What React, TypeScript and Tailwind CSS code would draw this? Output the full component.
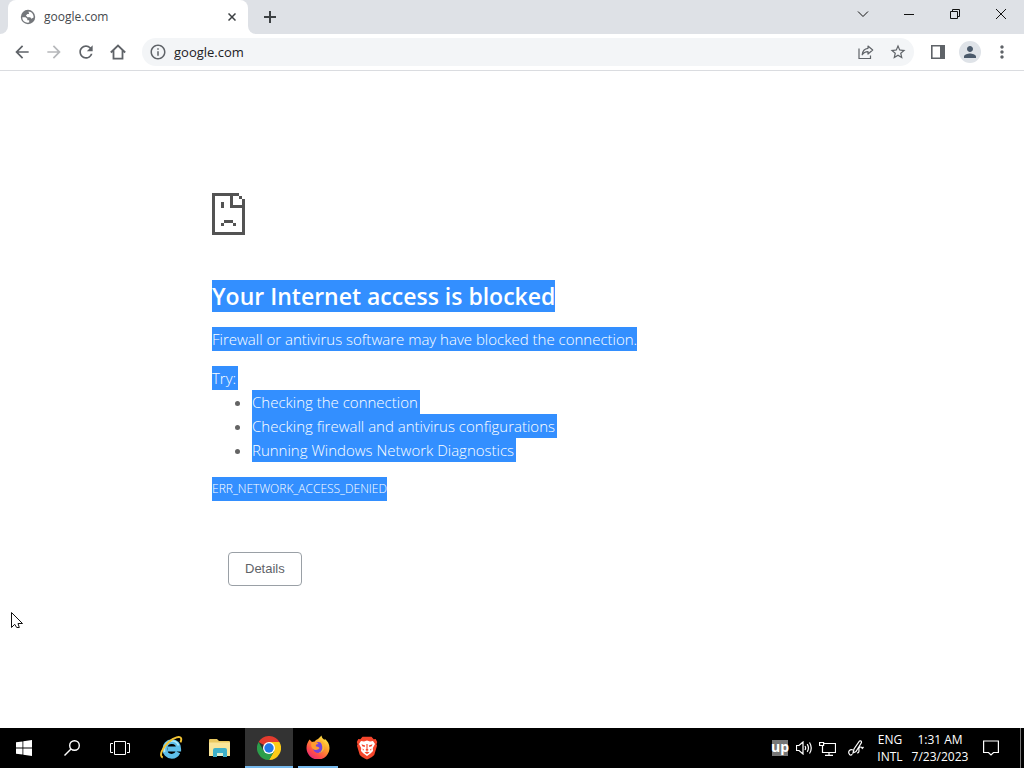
import type { ReactNode } from "react";
import { MdArrowBack, MdArrowForward, MdInfoOutline, MdMoreVert, MdPerson, MdRefresh, MdStarBorder } from "react-icons/md";

function Selected({ children, className = "" }: { children: ReactNode; className?: string }) {
  return <span className={`inline-block bg-[#338fff] text-white ${className}`}>{children}</span>;
}

function IconButton({ label, children, className = "w-8" }: { label: string; children: ReactNode; className?: string }) {
  return (
    <button aria-label={label} className={`flex h-8 shrink-0 items-center justify-center text-[#5f6368] ${className}`}>
      {children}
    </button>
  );
}

function WindowButton({ label, path }: { label: string; path: string }) {
  return (
    <button aria-label={label} className="flex h-7 w-[46px] items-center justify-center">
      <svg width="12" height="12" viewBox="0 0 12 12" fill="none" stroke="#111" strokeWidth="1">
        <path d={path} />
      </svg>
    </button>
  );
}

function TabStrip() {
  return (
    <header className="flex h-[34px] bg-[#dee1e6]">
      <div className="h-2 w-2 self-end bg-white">
        <div className="h-full rounded-br-lg bg-[#dee1e6]" />
      </div>
      <div className="flex w-60 items-center rounded-t-lg bg-white pr-2 pl-3">
        <svg className="shrink-0" width="16" height="16" viewBox="0 0 16 16" aria-hidden="true">
          <circle cx="8" cy="8" r="7.200" fill="#74777b" />
          <path d="M2.300 8.200h3.200l1.800 1.500v1.600h1.900v2.200c-3.600.8-7-1.600-6.900-5.300zM8.500 2.500c3 .2 5.300 2.700 5.100 5.900l-2.200 1.300-1.200-1.500H7.400L5.900 6.600 7.400 5h1.700z" fill="#fff" />
        </svg>
        <span className="ml-2 grow text-[12px] text-[#45494d]">google.com</span>
        <button aria-label="Close tab" className="flex size-4 items-center justify-center">
          <svg width="8" height="8" viewBox="0 0 8 8" stroke="#3c4043" strokeWidth="1.5">
            <path d="M.5.5l7 7M7.500.5l-7 7" />
          </svg>
        </button>
      </div>
      <div className="h-2 w-2 self-end bg-white">
        <div className="h-full rounded-bl-lg bg-[#dee1e6]" />
      </div>
      <button aria-label="New tab" className="flex w-7 items-center justify-center">
        <svg width="12" height="12" viewBox="0 0 12 12" stroke="#3c4043" strokeWidth="2">
          <path d="M0 6h12M6 0v12" />
        </svg>
      </button>
      <div className="ml-auto flex">
        <WindowButton label="Search tabs" path="M1 3.500l5 5 5-5" />
        <WindowButton label="Minimize" path="M1 6.500h10" />
        <WindowButton label="Restore" path="M1.500 3.500h7v7h-7zM3.500 3.500v-2h7v7h-2" />
        <WindowButton label="Close" path="M1 1l10 10M11 1L1 11" />
      </div>
    </header>
  );
}

function Toolbar() {
  return (
    <div className="flex h-[37px] items-center border-b border-[#dadce0] bg-white px-[6px]">
      <IconButton label="Back"><MdArrowBack className="size-5" /></IconButton>
      <IconButton label="Forward"><MdArrowForward className="size-5 text-[#b6b8bb]" /></IconButton>
      <IconButton label="Reload"><MdRefresh className="size-5" /></IconButton>
      <IconButton label="Home">
        <svg width="18" height="18" viewBox="0 0 18 18" fill="none" stroke="currentColor" strokeWidth="1.800">
          <path d="M1.800 9.500L9 2.500l7.200 7M4.500 7.500v8.100h9V7.500" />
        </svg>
      </IconButton>
      <div className="ml-2 flex h-7 grow items-center rounded-full bg-[#f3f5f7] pl-[7px]">
        <MdInfoOutline className="size-[18px] shrink-0 text-[#5f6368]" />
        <input aria-label="Address" defaultValue="google.com" className="ml-[7px] h-7 w-20 grow bg-transparent text-[13px] text-[#202124] outline-none" />
        <IconButton label="Share">
          <svg width="16" height="16" viewBox="0 0 16 16" fill="none" stroke="currentColor" strokeWidth="1.200">
            <path d="M1 4.500v10h11.500v-3" />
            <path d="M10 2l4.700 4L10 10V7.600C7 7.600 5.400 8.700 4.200 10.800 4.500 7.300 6.500 4.700 10 4.300z" strokeLinejoin="round" />
          </svg>
        </IconButton>
        <IconButton label="Bookmark"><MdStarBorder className="size-[18px]" /></IconButton>
      </div>
      <IconButton label="Side panel" className="ml-2 w-8">
        <svg width="14" height="14" viewBox="0 0 14 14" fill="none" stroke="currentColor" strokeWidth="1.600">
          <path d="M.8.8h12.400v12.400H.8z" />
          <path d="M9 1h4v12H9z" fill="currentColor" stroke="none" />
        </svg>
      </IconButton>
      <IconButton label="Profile">
        <span className="flex size-[22px] items-center justify-center rounded-full bg-[#dfe3e8] text-[#4b5a6b]">
          <MdPerson className="size-[18px]" />
        </span>
      </IconButton>
      <IconButton label="Menu"><MdMoreVert className="size-5" /></IconButton>
    </div>
  );
}

function SadPage() {
  return (
    <svg width="33" height="42" viewBox="0 0 11 14" fill="#535353" shapeRendering="crispEdges" aria-hidden="true">
      <path d="M0 0h9v1H1v12h9V5H6V1h1v3h3V2h1v12H0zM9 1h1v1H9zM3 3h1v2H3zM4 9h3v1H4zM3 10h1v1H3zM7 10h1v1H7z" />
    </svg>
  );
}

const suggestions = ["Checking the connection", "Checking firewall and antivirus configurations", "Running Windows Network Diagnostics"];

function ErrorPage() {
  return (
    <main className="relative grow bg-white px-6 pt-[122px] pb-8">
      <div className="mx-auto max-w-[600px] text-[15px] leading-6 font-light">
        <SadPage />
        <h1 className="mt-[45px] flex text-[23px] leading-8 font-semibold">
          <Selected>Your Internet access is blocked</Selected>
        </h1>
        <p className="mt-[15px] flex"><Selected>Firewall or antivirus software may have blocked the connection.</Selected></p>
        <p className="mt-[15px] flex"><Selected className="pr-[2px]">Try:</Selected></p>
        <ul className="list-disc pl-10 marker:text-[#646464]">
          {suggestions.map((s) => (
            <li key={s}><Selected className="pr-[2px] align-top">{s}</Selected></li>
          ))}
        </ul>
        <p className="mt-[15px] flex text-[12px]"><Selected>ERR_NETWORK_ACCESS_DENIED</Selected></p>
        <button className="mt-[51px] ml-4 h-[34px] rounded border border-[#9aa0a6] px-4 font-['Liberation_Sans',sans-serif] text-[13px] font-normal text-[#5f6368]">
          Details
        </button>
      </div>
      <svg className="absolute top-[541px] left-[11px]" width="13" height="16" viewBox="0 0 13 16" aria-hidden="true">
        <path d="M.5.5v15l3.200-3.200 2 3.200h2.600L7 11.500h4.500z" fill="#fff" stroke="#111" />
      </svg>
    </main>
  );
}

function IeIcon() {
  return (
    <svg width="24" height="24" viewBox="0 0 24 24" fill="none">
      <path d="M19 16.200c-1.200 2.600-3.500 4.100-6.200 4.100-4.200 0-7-3.200-7-7.300s2.900-7.300 7-7.300c4.300 0 6.900 3 6.900 7.300H8.500" stroke="#5ebfea" strokeWidth="4.800" />
      <path d="M5.500 16C4 10.500 8 5 13.200 5c3.300 0 5.400 1.800 6.300 4.500" stroke="#b5ecfb" strokeWidth="1.700" />
      <path d="M3.800 21.500C-.5 20 3.500 11.500 9.500 6.200 14.800 1.500 21.500-.8 22.200 2.800c.2 1-.1 2.200-.7 3.500" stroke="#f3c333" strokeWidth="1.900" />
    </svg>
  );
}

function FolderIcon() {
  return (
    <svg width="24" height="20" viewBox="0 0 24 20">
      <path d="M1 2q0-1 1-1h7l2 2h10q1 0 1 1v14H1z" fill="#e9c860" />
      <path d="M1 4.500h21V18H1z" fill="#f9e599" />
      <path d="M5 19v-7q0-2 2-2h10q2 0 2 2v7h-4v-4H9v4z" fill="#3db0c9" />
      <path d="M9 15h6v3H9z" fill="#d8edcf" />
    </svg>
  );
}

function ChromeIcon() {
  return (
    <svg width="24" height="24" viewBox="0 0 24 24">
      <path d="M12 12L1.600 6A12 12 0 0 1 22.400 6z" fill="#e33b2e" />
      <path d="M12 12V6h10.400A12 12 0 0 1 12 24l5.200-9z" fill="#fccb16" />
      <path d="M12 12l5.200 3L12 24A12 12 0 0 1 1.600 6l5.200 9z" fill="#2c9e4b" />
      <circle cx="12" cy="12" r="6" fill="#fff" />
      <circle cx="12" cy="12" r="4.700" fill="#2277e8" />
    </svg>
  );
}

function FirefoxIcon() {
  return (
    <svg width="24" height="24" viewBox="0 0 24 24">
      <defs>
        <linearGradient id="flame" x1=".85" y1=".05" x2=".2" y2=".95">
          <stop offset="0" stopColor="#fff04a" />
          <stop offset=".4" stopColor="#ff9a2b" />
          <stop offset=".75" stopColor="#ff4d48" />
          <stop offset="1" stopColor="#e52978" />
        </linearGradient>
      </defs>
      <path d="M3.500 4.500L6 7c.7-.3 1.500-.4 2.500-.2 1-1.400 2-2.300 3.500-2.800L15.500.5c.2 2.300 1.600 3.300 3 4.500l.3-1.200C21.700 6.200 23.500 9 23.500 13A11.500 11.500 0 0 1 .5 13c0-3.500 1.200-6 3-8.500z" fill="url(#flame)" />
      <circle cx="12.500" cy="12.500" r="5.600" fill="#7543da" />
      <path d="M5.500 7.500c2.500-1.300 5-.9 7 1.500-2.500 0-3 1.200-2.500 2.500 1.500 0 2.500.5 3.500 1.500-1.700 2.400-4.500 2.500-6.500 1-1.800-1.500-2.300-4-1.500-6.500z" fill="#ff9c2f" />
      <path d="M13 5c3.500.5 6 3.500 5.500 7.500-.3 3.300-3 5.500-6 5.500 4.500-1.500 5.500-7 .5-13z" fill="#ffb52c" />
    </svg>
  );
}

function BraveIcon() {
  return (
    <svg width="22" height="24" viewBox="0 0 22 24">
      <path d="M6.500.8h9l2.200 2.400 2-.1 1.500 3-.7 2.200.5 1.500-2.600 8.700c-.7 1.700-4.500 3.700-7.400 5-2.900-1.300-6.700-3.300-7.400-5L1 9.800l.5-1.500-.7-2.200 1.500-3 2 .1z" fill="#f5462c" />
      <path d="M5 5l3 .6L11 4.500l3 1.100 3-.6 2 3-2.200 4 .2 3-2.500 2.500L11 20l-3.500-2.500L5 15l.2-3L3 8z" fill="#fff" />
      <path d="M5.500 8.300l3.700 1.300-.6 1.300-2.300-.7zM16.500 8.300l-3.700 1.300.6 1.300 2.300-.7zM10.400 8h1.200l-.1 4.800 1.100 1.300-1.600.9-1.600-.9 1.100-1.300zM6.500 12.500l1.500 1-1 1.200zM15.500 12.500l-1.500 1 1 1.200zM8.500 16.500l2.500-.9 2.500.9-2.500 1.400z" fill="#f5462c" />
    </svg>
  );
}

function TaskButton({ label, children, className = "" }: { label: string; children: ReactNode; className?: string }) {
  return (
    <button aria-label={label} className={`flex h-10 w-12 shrink-0 items-center justify-center ${className}`}>
      {children}
    </button>
  );
}

function Taskbar() {
  return (
    <footer className="flex h-10 bg-black text-[12px] text-white">
      <TaskButton label="Start">
        <svg width="16" height="16" viewBox="0 0 16 16" fill="#fff">
          <path d="M0 2.300l6.500-.9v6.200H0zM7.300 1.300L16 0v7.600H7.300zM0 8.400h6.500v6.200L0 13.700zM7.300 8.400H16V16l-8.700-1.300z" />
        </svg>
      </TaskButton>
      <TaskButton label="Search">
        <svg width="16" height="16" viewBox="0 0 16 16" fill="none" stroke="#fff" strokeWidth="1.400">
          <circle cx="10.500" cy="5.500" r="4.800" />
          <path d="M7 9L.5 15.500" />
        </svg>
      </TaskButton>
      <TaskButton label="Task view">
        <svg width="20" height="14" viewBox="0 0 20 14" fill="none" stroke="#fff">
          <path d="M4.500.5h11v13h-11zM3 2.500H.5v9H3M17 2.500h2.500v9H17" />
        </svg>
      </TaskButton>
      <div className="ml-[3px] flex gap-px">
        <TaskButton label="Internet Explorer"><IeIcon /></TaskButton>
        <TaskButton label="File Explorer"><FolderIcon /></TaskButton>
        <TaskButton label="Chrome" className="border-b-2 border-[#76b9ed] bg-[#333] pt-[2px]"><ChromeIcon /></TaskButton>
        <TaskButton label="Firefox" className="px-1">
          <span className="flex h-full grow items-center justify-center border-b-2 border-[#76b9ed]"><FirefoxIcon /></span>
        </TaskButton>
        <TaskButton label="Brave"><BraveIcon /></TaskButton>
      </div>
      <div className="ml-auto flex items-center">
        <span className="flex size-4 items-center justify-center bg-[#777] pb-[2px] text-[14px] leading-4 font-bold">up</span>
        <svg className="ml-2" width="17" height="14" viewBox="0 0 17 14" fill="none" stroke="#fff" strokeWidth="1.200">
          <path d="M.5 4.500H3l4-3.500v12L3 9.500H.5zM9 5q1.300 2 0 4M11.200 3.200q2.500 3.800 0 7.600M13.500 1.500q3.500 5.500 0 11" />
        </svg>
        <svg className="ml-[6px]" width="17" height="15" viewBox="0 0 17 15" fill="none" stroke="#fff" strokeWidth="1.200">
          <path d="M5 2.500h11.500v9H3.500V5M10 11.500v3M6 14.400h8M.6 1.500h4v3h-4z" />
        </svg>
        <svg className="ml-3" width="16" height="16" viewBox="0 0 16 16" fill="none" stroke="#fff" strokeWidth="1.200">
          <path d="M5 13l1-4 5.500-8q2-.8 2 1.500L8 11.500zM5 10c-3-1-5 1-4 3.500s3 1.500 3 .5M9 13c4 0 0-6 3.500-6s0 3.500 3 0" />
        </svg>
        <div className="ml-[2px] flex h-10 w-12 flex-col justify-center text-center leading-[17px]"><span>ENG</span><span>INTL</span></div>
        <div className="flex h-10 w-[52px] flex-col items-center justify-center leading-[17px] whitespace-nowrap"><span>1:31 AM</span><span>7/23/2023</span></div>
        <button aria-label="Notifications" className="flex w-[54px] items-center justify-center pr-1">
          <svg width="16" height="16" viewBox="0 0 16 16" fill="none" stroke="#fff" strokeWidth="1.200">
            <path d="M.6 1h14.800v11.500h-4.900L8 15l-2.500-2.500H.6z" />
          </svg>
        </button>
        <div className="h-10 w-1 border-l border-[#777]" />
      </div>
    </footer>
  );
}

export default function App() {
  return (
    <div className="flex min-h-screen flex-col bg-white font-['Open_Sans','Noto_Sans',sans-serif]">
      <TabStrip />
      <Toolbar />
      <ErrorPage />
      <Taskbar />
    </div>
  );
}
